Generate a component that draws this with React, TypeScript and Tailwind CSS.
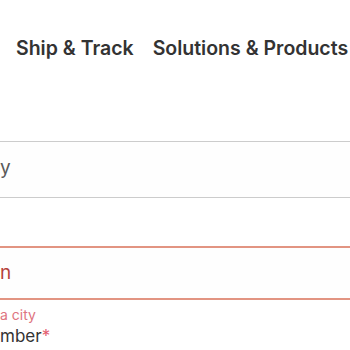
export default function App() {
  return (
    <div className="w-[350px] h-[350px] overflow-hidden bg-white" style={{ fontFamily: "Inter, 'Noto Sans', sans-serif" }}>
      {/* Top navigation */}
      <nav className="flex items-center gap-[19px] pl-4 pt-[35px] h-[62px]">
        <span className="text-[19.5px] font-semibold text-[#333333] whitespace-nowrap">Ship &amp; Track</span>
        <span className="text-[19.5px] font-semibold text-[#333333] whitespace-nowrap">Solutions &amp; Products</span>
      </nav>

      {/* Form fields, cut off on the left */}
      <div className="mt-[79px] flex flex-col">
        <div className="h-[57px] border-y border-[#cccccc] bg-[#fefefe] flex items-center">
          <span className="text-[19px] text-[#5a5a5a] leading-none pb-1">y</span>
        </div>

        <div className="mt-[48px] h-[54px] border-y-2 border-[#e29482] bg-[#fefefe] flex items-center">
          <span className="text-[19px] text-[#b5423a] leading-none pb-[2px]">n</span>
        </div>

        <span className="mt-[6px] text-[14px] leading-[18px] text-[#de7480]">a city</span>
        <span className="mt-[2px] text-[17px] leading-[20px] text-[#333333]">
          mber<span className="text-[#e35b6e]">*</span>
        </span>
      </div>
    </div>
  );
}
